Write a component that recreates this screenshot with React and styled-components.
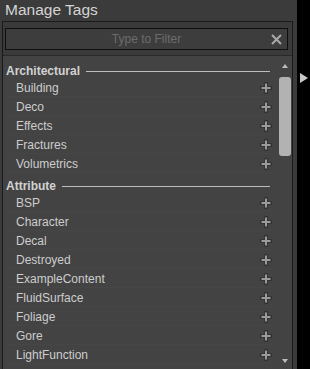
import React from 'react';
import styled, { createGlobalStyle } from 'styled-components';

const GlobalStyle = createGlobalStyle`
  html, body {
    margin: 0;
    padding: 0;
    background: #000;
  }
  body {
    font-family: "Liberation Sans", Arial, sans-serif;
  }
`;

const Page = styled.div`
  display: flex;
  width: 310px;
  height: 369px;
  overflow: hidden;
`;

const Panel = styled.div`
  width: 297px;
  height: 369px;
  background: #3b3b3b;
  display: flex;
  flex-direction: column;
`;

const Title = styled.div`
  height: 21px;
  padding-left: 5px;
  font-size: 15.5px;
  line-height: 20px;
  color: #d4d4d4;
  flex-shrink: 0;
`;

const Frame = styled.div`
  margin-left: 2px;
  width: 289px;
  flex: 1;
  min-height: 0;
  border: 1px solid #1a1a1a;
  border-bottom: none;
  display: flex;
  flex-direction: column;
  background: #3a3a3a;
`;

const FilterBar = styled.div`
  padding: 6px 4px 5px 2px;
  border-bottom: 1px solid #2a2a2a;
  flex-shrink: 0;
`;

const FilterBox = styled.div`
  height: 20px;
  border: 1px solid #0f0f0f;
  background: #3d3d3d;
  display: flex;
  align-items: center;
`;

const Placeholder = styled.div`
  flex: 1;
  text-align: center;
  font-size: 12px;
  color: #6c6c6c;
`;

const ClearButton = styled.div`
  width: 22px;
  display: flex;
  align-items: center;
  justify-content: center;
`;

const Body = styled.div`
  flex: 1;
  min-height: 0;
  display: flex;
  background: #434343;
`;

const List = styled.div`
  flex: 1;
  overflow: hidden;
  padding: 0 5px 0 3px;
`;

const Header = styled.div`
  margin-top: ${({ $first }) => ($first ? '8px' : '6px')};
  height: 14px;
  display: flex;
  align-items: center;
  gap: 6px;
  padding-right: 2px;
  font-size: 12px;
  font-weight: bold;
  color: #d2d2d2;

  &::after {
    content: '';
    flex: 1;
    height: 1px;
    background: #bdbdbd;
  }
`;

const Row = styled.div`
  height: 19px;
  display: flex;
  align-items: center;
  padding-left: 10px;
  font-size: 12px;
  color: #cdcdcd;
  box-shadow: inset 0 -1px 0 rgba(255, 255, 255, 0.02);
`;

const Label = styled.span`
  flex: 1;
`;

const Scroll = styled.div`
  width: 15px;
  display: flex;
  flex-direction: column;
  align-items: center;
  padding-top: 8px;
`;

const Arrow = styled.div`
  width: 0;
  height: 0;
  border-left: 3.5px solid transparent;
  border-right: 3.5px solid transparent;
  ${({ $down }) =>
    $down ? 'border-top: 4px solid #bdbdbd;' : 'border-bottom: 4px solid #bdbdbd;'}
  margin-bottom: ${({ $down }) => ($down ? '0' : '9px')};
  margin-top: ${({ $down }) => ($down ? '203px' : '0')};
`;

const Thumb = styled.div`
  width: 12px;
  height: 79px;
  border-radius: 3px;
  background: #b2b2b2;
`;

const Side = styled.div`
  flex: 1;
  padding-top: 73px;
  padding-left: 3px;
`;

const Pointer = styled.div`
  width: 0;
  height: 0;
  border-top: 5px solid transparent;
  border-bottom: 5px solid transparent;
  border-left: 8px solid #c8c8c8;
`;

const PlusIcon = () => (
  <svg width="12" height="12" viewBox="0 0 12 12">
    <path d="M6 1.5v9M1.5 6h9" stroke="#1f1f1f" strokeWidth="3.4" strokeLinecap="square" opacity="0.5" />
    <path d="M6 1.5v9M1.5 6h9" stroke="#9a9a9a" strokeWidth="2" />
  </svg>
);

const XIcon = () => (
  <svg width="11" height="11" viewBox="0 0 11 11">
    <path d="M1 1l9 9M10 1l-9 9" stroke="#a8a8a8" strokeWidth="2" />
  </svg>
);

const groups = [
  { name: 'Architectural', items: ['Building', 'Deco', 'Effects', 'Fractures', 'Volumetrics'] },
  {
    name: 'Attribute',
    items: ['BSP', 'Character', 'Decal', 'Destroyed', 'ExampleContent', 'FluidSurface', 'Foliage', 'Gore', 'LightFunction'],
  },
];

export default function App() {
  return (
    <Page>
      <GlobalStyle />
      <Panel>
        <Title>Manage Tags</Title>
        <Frame>
          <FilterBar>
            <FilterBox>
              <ClearButton />
              <Placeholder>Type to Filter</Placeholder>
              <ClearButton>
                <XIcon />
              </ClearButton>
            </FilterBox>
          </FilterBar>
          <Body>
            <List>
              {groups.map((g, i) => (
                <div key={g.name}>
                  <Header $first={i === 0}>{g.name}</Header>
                  {g.items.map((item) => (
                    <Row key={item}>
                      <Label>{item}</Label>
                      <PlusIcon />
                    </Row>
                  ))}
                </div>
              ))}
            </List>
            <Scroll>
              <Arrow />
              <Thumb />
              <Arrow $down />
            </Scroll>
          </Body>
        </Frame>
      </Panel>
      <Side>
        <Pointer />
      </Side>
    </Page>
  );
}
